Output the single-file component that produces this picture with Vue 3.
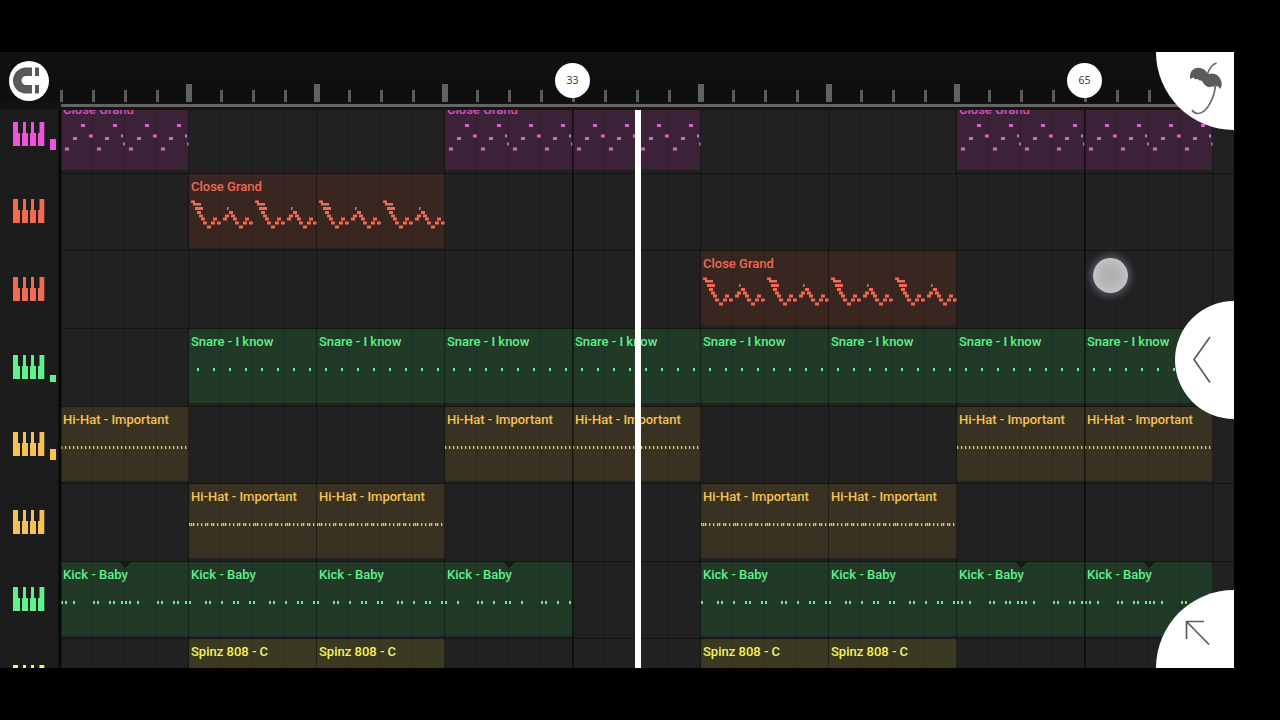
<script setup>
// Playlist view: ruler on top, one lane per instrument, clips sit on an 8-bar grid
const ticks = Array.from({ length: 37 }, (_, i) => ({
  big: i > 0 && i % 4 === 0 && i !== 16 && i !== 32,
  marker: i === 16 ? '33' : i === 32 ? '65' : '',
}))

const repeat = (notes, period) => [0, 1].flatMap((n) => notes.map(([x, y, w, h]) => [x + n * period, y, w, h]))
const hits = (xs, w = 2) => xs.map((x) => [x, 39, w, 3])

const melody = repeat([
  [4, 51.5, 4, 3], [12, 41, 4, 3], [20, 28, 4, 3], [28, 38.5, 4, 3], [36, 51.5, 4, 3],
  [44, 41, 4, 3], [52, 28, 4, 3], [60, 38.5, 2, 3], [62, 46.5, 2, 3],
], 64)

const chords = repeat([
  [2, 26.5, 4, 2.5], [4, 29, 8, 2.5], [6, 33, 8, 3], [8, 37, 4, 3], [10, 40.5, 4, 3],
  [12, 43.5, 4, 3], [14, 47.5, 4, 3], [18, 51.5, 4, 3], [22, 47.5, 4, 3], [24, 43.5, 4, 3],
  [28, 47.5, 4, 3], [34, 43.5, 4, 3], [36, 40.5, 4, 3], [38, 33, 1.5, 3], [40, 37, 4, 3],
  [42, 40.5, 4, 3], [44, 43.5, 4, 3], [46, 47.5, 4, 3], [50, 51.5, 4, 3], [54, 47.5, 4, 3],
  [56, 43.5, 4, 3], [60, 47.5, 4, 3],
], 64)

const snare = hits([8, 24, 40, 56, 72, 88, 104, 120])
const hatEven = hits(Array.from({ length: 32 }, (_, i) => i * 4), 1.3)
const hatRoll = hits([0, 32, 64, 96].flatMap((n) => [0, 2, 4, 8, 12, 16, 18, 22, 24, 28].map((x) => x + n)), 1.3)
const kickA = hits([0, 4, 12, 32, 36, 48, 52, 60, 64, 68, 76, 96, 100, 112, 116, 124])
const kickB = hits([0, 16, 20, 32, 44, 48, 60, 64, 80, 84, 96, 108, 112, 124])
const kickC = hits([0, 12, 32, 36, 48, 60, 64, 76, 96, 100, 112, 124])

const clips = (name, cols, notes) => cols.map((col) => ({ name, col, notes }))
// a run of adjacent clips carries its name only once
const joined = (name, cols, notes) => cols.map((col) => ({ name: cols.includes(col - 1) ? '' : name, col, notes }))
const notched = (list) => list.map((c) => ({ ...c, notch: true }))

const tracks = [
  { color: 'purple', level: 'high', clips: joined('Close Grand', [1, 4, 5, 8, 9], melody) },
  { color: 'red', clips: joined('Close Grand', [2, 3], chords) },
  { color: 'red', clips: joined('Close Grand', [6, 7], chords) },
  { color: 'green', level: 'low', clips: clips('Snare - I know', [2, 3, 4, 5, 6, 7, 8, 9], snare) },
  { color: 'orange', level: 'mid', clips: clips('Hi-Hat - Important', [1, 4, 5, 8, 9], hatEven) },
  { color: 'orange', clips: clips('Hi-Hat - Important', [2, 3, 6, 7], hatRoll) },
  {
    color: 'green',
    clips: [
      ...notched(clips('Kick - Baby', [1], kickA)),
      ...clips('Kick - Baby', [2, 3], kickB),
      ...notched(clips('Kick - Baby', [4], kickC)),
      ...clips('Kick - Baby', [6, 7], kickB),
      ...notched(clips('Kick - Baby', [8, 9], kickA)),
    ],
  },
  { color: 'yellow', clips: clips('Spinz 808 - C', [2, 3, 6, 7], []) },
]
</script>

<template>
  <div class="screen">
    <div class="stage">
      <header class="ruler">
        <div class="ticks">
          <div v-for="(t, i) in ticks" :key="i" class="tick-cell">
            <i class="tick" :class="{ big: t.big }" />
            <span v-if="t.marker" class="marker">{{ t.marker }}</span>
          </div>
        </div>
        <div class="range" />
        <button class="snap" aria-label="Snap">
          <svg width="40" height="40" viewBox="0 0 40 40">
            <path d="M23 6.5H17A13 13 0 0 0 17 32.500H23V24H17A4.500 4.500 0 0 1 17 15H23Z" fill="#59595b" />
            <path d="M26 6.500H30V15H26ZM26 24H30V32.500H26Z" fill="#59595b" />
          </svg>
        </button>
      </header>

      <main class="playlist">
        <div class="tracks">
          <section v-for="(track, i) in tracks" :key="i" class="track" :class="track.color">
            <div class="head">
              <svg class="keys" width="32" height="24" viewBox="0 0 32 24">
                <path d="M0 0H5V11H7V24H0ZM10 0H13V11H15V24H9V11H10ZM18 0H21V11H23V24H17V11H18ZM26.500 0H31.300V24H25V11H26.500Z" fill="currentColor" />
              </svg>
              <i v-if="track.level" class="level" :class="track.level" />
            </div>
            <div class="lane">
              <div v-for="clip in track.clips" :key="clip.col" class="clip" :style="{ gridColumn: clip.col }">
                <span class="name">{{ clip.name }}</span>
                <svg class="notes" width="128" height="74" viewBox="0 0 128 74">
                  <rect v-for="(n, k) in clip.notes" :key="k" :x="n[0]" :y="n[1]" :width="n[2]" :height="n[3]" fill="currentColor" />
                  <path v-if="clip.notch" d="M58 0H70L64 6Z" fill="#141714" />
                </svg>
              </div>
            </div>
          </section>
        </div>
        <div class="grid" />
        <div class="playhead" />
        <div class="touch" />
      </main>

      <button class="corner top" aria-label="Menu">
        <svg width="34" height="54" viewBox="0 0 34 54">
          <path d="M27.500 1C23 2.500 20 7 18.500 12" fill="none" stroke="#6a6a6c" stroke-width="1.500" />
          <path d="M1 14C1.500 8 6 5 11 6C15 6.500 17.500 9 18.500 12C25 10 31 13 32.500 20C33 23 32.500 25 31 27C29.500 23.500 27.500 23.500 25.500 24.500C22 24 20 26.500 17.500 24C14 22.500 14.500 19.500 12 18.500C10 19 8.500 15.500 6 17.500L4.500 15.500L1 17Z" fill="#5b5b5d" />
          <path d="M26.500 22C26 35 18 51 9.500 51.500C6.500 51.500 4.500 50.500 3 48" fill="none" stroke="#6a6a6c" stroke-width="1.700" />
        </svg>
      </button>
      <button class="side" aria-label="Open panel">
        <svg width="20" height="48" viewBox="0 0 20 48">
          <path d="M18 1L2 23.500L18 46.500" fill="none" stroke="#5c5c5e" stroke-width="1.700" />
        </svg>
      </button>
      <button class="corner bottom" aria-label="Expand">
        <svg width="26" height="26" viewBox="0 0 26 26">
          <path d="M1.500 19V1.500H19M1.500 1.500L24 24.500" fill="none" stroke="#5c5c5e" stroke-width="1.700" />
        </svg>
      </button>
    </div>
  </div>
</template>

<style>
body { margin: 0; background: #000; }
</style>

<style scoped>
.screen { width: 1280px; height: 720px; box-sizing: border-box; padding: 52px 46px 52px 0; background: #000; font-family: Roboto, "Liberation Sans", sans-serif; }
.stage { position: relative; display: flex; flex-direction: column; height: 616px; overflow: hidden; background: #202020; }
button { display: flex; align-items: flex-start; border: 0; padding: 0; margin: 0; background: #fff; }
svg { display: block; flex: none; }

.ruler { position: relative; flex: none; height: 58px; overflow: hidden; background: linear-gradient(#111, #0e0e0e 80%, #161616); }
.ticks { display: flex; height: 50px; padding-left: 45px; }
.tick-cell { position: relative; flex: none; width: 32px; display: flex; justify-content: center; align-items: flex-end; }
.tick { width: 3px; height: 12px; background: #5c5c5c; }
.tick.big { width: 6px; height: 18px; background: #626262; }
.marker { position: absolute; left: -2px; top: 11px; width: 35px; height: 35px; border-radius: 50%; background: #fff; color: #3c3c3e; font: 10.500px/34px "Noto Sans", sans-serif; text-align: center; }
.range { height: 3px; margin: 2px 0 0 61px; background: #646464; }
.snap { position: absolute; left: 9px; top: 9px; width: 40px; height: 40px; border-radius: 50%; }

.playlist { position: relative; flex: 1; overflow: hidden; }
.tracks { margin-top: -14.8px; }
.track { display: flex; height: 77.6px; }
.head { flex: none; display: flex; width: 58px; box-sizing: border-box; padding: 25.7px 0 0 13px; border-top: 1px solid #171717; background: #1c1c1c; }
.level { width: 5.500px; height: 7px; margin: 20px 0 0 5px; background: currentColor; }
.level.high { height: 11px; margin-top: 17px; }
.level.mid { height: 11px; margin-top: 16.700px; }
.lane { flex: 1; display: grid; grid-template-columns: repeat(9, 128px); box-sizing: border-box; height: 77.6px; border-top: 1px solid #151515; border-left: 3px solid #0d0d0d; background: #212121; }
.clip { position: relative; grid-row: 1; height: 74px; background: var(--fill); }
.name { position: absolute; left: 2px; top: 5px; font-size: 13px; line-height: 16px; font-weight: 500; white-space: nowrap; }
.purple { color: #f052dc; --fill: #3b2239; }
.purple .name { top: 6px; color: #d850c6; }
.purple .notes { color: #dc64c8; }
.red { color: #f26a50; --fill: #3a2620; }
.green { color: #5df28a; --fill: #213a28; }
.orange { color: #f7c254; --fill: #393222; }
.yellow { color: #f5f55c; --fill: #3a3922; }

.grid {
  position: absolute; inset: 0 0 0 60px; pointer-events: none;
  background:
    linear-gradient(90deg, rgba(0, 0, 0, .35) 2px, transparent 2px) 512px 0 / 512px 100%,
    linear-gradient(90deg, rgba(0, 0, 0, .3) 1px, transparent 1px) 0 0 / 128px 100%,
    linear-gradient(90deg, rgba(0, 0, 0, .15) 1px, transparent 1px) 0 0 / 32px 100%;
}
.playhead { position: absolute; left: 635px; top: 0; width: 5.500px; bottom: 0; background: #fff; }
.touch { position: absolute; left: 1093px; top: 148px; width: 35px; height: 35px; border-radius: 50%; background: radial-gradient(#adadad, #b8b8b8 45%, #c9c9c9 80%, #c4c4cc); box-shadow: 0 0 7px 3px rgba(120, 118, 150, .6); }

.corner { position: absolute; right: 0; width: 78px; height: 78px; }
.corner.top { top: 0; border-radius: 0 0 0 78px; padding: 10px 0 0 33px; }
.corner.bottom { bottom: 0; border-radius: 78px 0 0 0; padding: 30px 0 0 28.500px; }
.side { position: absolute; right: 0; top: 249px; width: 59px; height: 118px; border-radius: 59px 0 0 59px; align-items: center; padding-left: 17px; }
</style>
